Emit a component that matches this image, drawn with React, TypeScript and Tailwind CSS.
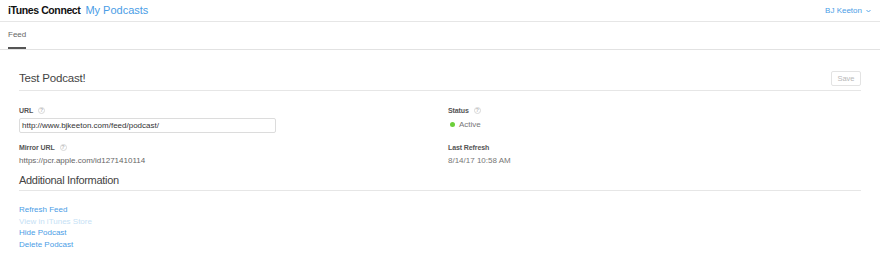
import React from "react";

const linkBlue = "text-[#4a9de6]";

function Help() {
    return (
        <span className="ml-[5px] inline-flex h-[7px] w-[7px] items-center justify-center rounded-full border border-[#d8d8d8] text-[5px] leading-none text-[#b5b5b5]">
            ?
        </span>
    );
}

function Label({ children, help }: { children: React.ReactNode; help?: boolean }) {
    return (
        <div className="flex h-[9px] items-center text-[7px] font-bold leading-[9px] tracking-[-0.1px] text-[#555]">
            {children}
            {help && <Help />}
        </div>
    );
}

export default function App() {
    return (
        <div
            className="h-[253px] w-[880px] overflow-hidden bg-white text-[#555]"
            style={{ fontFamily: '"Liberation Sans", Arial, sans-serif' }}
        >
            {/* top bar */}
            <header className="flex h-[22px] items-center justify-between border-b border-[#e6e6e6] pl-[8px] pr-[9px]">
                <div className="flex items-center gap-[5px]">
                    <span className="text-[10.5px] font-bold tracking-[-0.4px] text-[#111]">
                        iTunes Connect
                    </span>
                    <span className={`text-[11px] ${linkBlue}`}>My Podcasts</span>
                </div>
                <button className={`flex items-center gap-[4px] text-[8px] ${linkBlue}`}>
                    BJ Keeton
                    <svg width="5" height="4" viewBox="0 0 5 4" fill="none">
                        <path d="M0.5 1l2 2 2-2" stroke="currentColor" strokeWidth="0.9" />
                    </svg>
                </button>
            </header>

            {/* tabs */}
            <nav className="flex h-[28px] items-stretch border-b border-[#e2e2e2] pl-[8px]">
                <span className="flex items-center border-b-[2px] border-[#555] pt-[1px] text-[8px] text-[#666]">
                    Feed
                </span>
            </nav>

            <main className="px-[19px]">
                <div className="mt-[21px] flex items-center justify-between border-b border-[#e6e6e6] pb-[4px]">
                    <h1 className="text-[11.5px] leading-[15px] tracking-[-0.2px] text-[#444]">
                        Test Podcast!
                    </h1>
                    <button className="flex h-[15px] w-[30px] items-center justify-center rounded-[2px] border border-[#e3e3e3] text-[7.5px] text-[#b8b8b8]">
                        Save
                    </button>
                </div>

                <div className="mt-[15px] grid grid-cols-[429px_1fr]">
                    <div>
                        <Label help>URL</Label>
                        <div className="mt-[3px] flex h-[15px] w-[257px] items-center rounded-[2px] border border-[#dcdcdc] px-[2px] text-[8px] text-[#333]">
                            http://www.bjkeeton.com/feed/podcast/
                        </div>
                    </div>
                    <div>
                        <Label help>Status</Label>
                        <div className="mt-[2px] flex h-[15px] items-center gap-[4px] pl-[2px] text-[8px] text-[#777]">
                            <span className="h-[5px] w-[5px] rounded-full bg-[#6ccf3a]" />
                            Active
                        </div>
                    </div>

                    <div className="mt-[10px]">
                        <Label help>Mirror URL</Label>
                        <div className="mt-[4px] text-[8px] leading-[10px] text-[#666]">
                            https://pcr.apple.com/id1271410114
                        </div>
                    </div>
                    <div className="mt-[10px]">
                        <Label>Last Refresh</Label>
                        <div className="mt-[4px] text-[8px] leading-[10px] text-[#777]">
                            8/14/17 10:58 AM
                        </div>
                    </div>
                </div>

                <div className="mt-[7px] border-b border-[#e6e6e6] pb-[3px]">
                    <h2 className="text-[11px] leading-[14px] tracking-[-0.3px] text-[#444]">
                        Additional Information
                    </h2>
                </div>

                <ul className="mt-[13px] text-[8px] leading-[11.5px]">
                    <li className={linkBlue}>Refresh Feed</li>
                    <li className="text-[#c6dff5]">View in iTunes Store</li>
                    <li className={linkBlue}>Hide Podcast</li>
                    <li className={linkBlue}>Delete Podcast</li>
                </ul>
            </main>
        </div>
    );
}
